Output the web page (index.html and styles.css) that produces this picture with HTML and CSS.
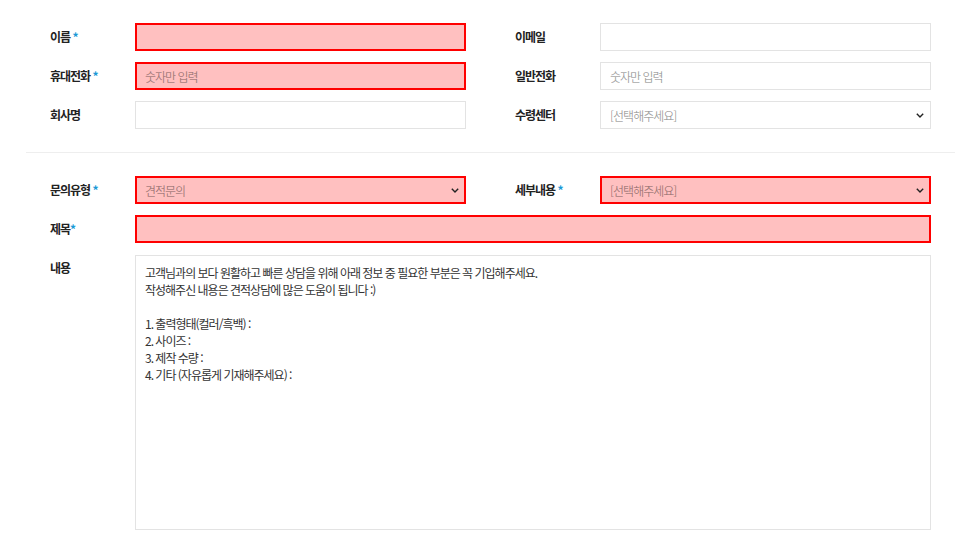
FILE: index.html
```html
<!DOCTYPE html>
<html lang="ko">
<head>
  <meta charset="UTF-8" />
  <meta name="viewport" content="width=device-width, initial-scale=1.0"/>
  <title>견적문의</title>
  <link rel="stylesheet" href="styles.css">
</head>
<body>
  <form class="inquiry">
    <div class="pair">
      <div class="field">
        <label>이름 <span class="req">*</span></label>
        <input type="text" class="error">
      </div>
      <div class="field">
        <label>이메일</label>
        <input type="text">
      </div>
    </div>

    <div class="pair">
      <div class="field">
        <label>휴대전화 <span class="req">*</span></label>
        <input type="text" class="error" placeholder="숫자만 입력">
      </div>
      <div class="field">
        <label>일반전화</label>
        <input type="text" placeholder="숫자만 입력">
      </div>
    </div>

    <div class="pair">
      <div class="field">
        <label>회사명</label>
        <input type="text">
      </div>
      <div class="field">
        <label>수령센터</label>
        <div class="select-wrap">
          <select><option>[선택해주세요]</option></select>
          <svg class="chev" width="8" height="5" viewBox="0 0 8 5"><path d="M0.8 0.8l3.2 3.2 3.2-3.2" fill="none" stroke="#222" stroke-width="1.4"/></svg>
        </div>
      </div>
    </div>

    <hr class="divider">

    <div class="pair">
      <div class="field">
        <label>문의유형 <span class="req">*</span></label>
        <div class="select-wrap">
          <select class="error"><option>견적문의</option></select>
          <svg class="chev" width="8" height="5" viewBox="0 0 8 5"><path d="M0.8 0.8l3.2 3.2 3.2-3.2" fill="none" stroke="#222" stroke-width="1.4"/></svg>
        </div>
      </div>
      <div class="field">
        <label>세부내용 <span class="req">*</span></label>
        <div class="select-wrap">
          <select class="error"><option>[선택해주세요]</option></select>
          <svg class="chev" width="8" height="5" viewBox="0 0 8 5"><path d="M0.8 0.8l3.2 3.2 3.2-3.2" fill="none" stroke="#222" stroke-width="1.4"/></svg>
        </div>
      </div>
    </div>

    <div class="field">
      <label>제목<span class="req">*</span></label>
      <input type="text" class="error">
    </div>

    <div class="field top">
      <label>내용</label>
      <textarea>고객님과의 보다 원활하고 빠른 상담을 위해 아래 정보 중 필요한 부분은 꼭 기입해주세요.
작성해주신 내용은 견적상담에 많은 도움이 됩니다 :)

1. 출력형태(컬러/흑백) :
2. 사이즈 :
3. 제작 수량 :
4. 기타 (자유롭게 기재해주세요) :</textarea>
    </div>
  </form>
</body>
</html>
```

FILE: styles.css
```css
body {
  margin: 0;
  background: #fff;
  font-family: "Noto Sans CJK KR", "Noto Sans", sans-serif;
  color: #222;
  letter-spacing: -1px;
}
.inquiry {
  padding: 23px 49px 0 50px;
  display: flex;
  flex-direction: column;
  gap: 11px;
}
.pair {
  display: grid;
  grid-template-columns: 1fr 1fr;
  column-gap: 49px;
}
.field {
  display: flex;
  align-items: center;
}
.field.top { align-items: flex-start; margin-top: 1px; }
.field label {
  width: 85px;
  flex-shrink: 0;
  font-size: 12px;
  font-weight: 700;
  color: #222;
  padding-bottom: 1px;
}
.field.top label { padding-top: 4px; }
.req { color: #1a9ad6; font-weight: 700; }
input, select, textarea {
  flex: 1;
  min-width: 0;
  box-sizing: border-box;
  height: 28px;
  border: 1px solid #e3e3e3;
  background: #fff;
  font-family: inherit;
  font-size: 12px;
  letter-spacing: -1px;
  color: #333;
  padding: 0 9px;
  outline: none;
  border-radius: 0;
  margin: 0;
}
input::placeholder { color: rgba(0,0,0,0.38); }
select {
  -webkit-appearance: none;
  appearance: none;
  width: 100%;
  color: rgba(0,0,0,0.38);
}
.error {
  border: 2px solid #ff0000;
  background: #ffc0c0;
  padding-left: 8px;
}
.select-wrap {
  flex: 1;
  position: relative;
  display: flex;
}
.chev {
  position: absolute;
  right: 7px;
  top: 12px;
  pointer-events: none;
}
.divider {
  border: none;
  border-top: 1px solid #eee;
  margin: 12px -24px 12px -24px;
}
textarea {
  height: 275px;
  padding: 8px 9px;
  line-height: 17px;
  resize: none;
}
```
